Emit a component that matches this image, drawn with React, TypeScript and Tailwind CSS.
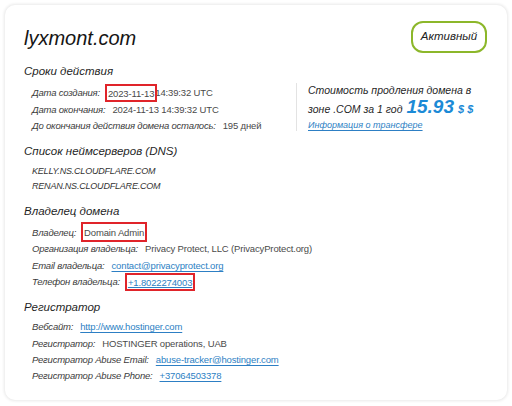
import React from "react";

const sans = "font-['Liberation_Sans',Arial,sans-serif]";
const italic = `${sans} italic`;

function Heading({ children }: { children: React.ReactNode }) {
  return (
    <div className={`${italic} text-[11.5px] leading-[18px] text-[#1f1f1f]`}>{children}</div>
  );
}

function Row({ label, children }: { label: string; children: React.ReactNode }) {
  return (
    <div className="flex h-[16.5px] items-center gap-[7px] whitespace-nowrap pl-[8px]">
      <span className={`${italic} text-[9.5px] tracking-[-0.2px] text-[#3c3c3c]`}>{label}</span>
      <span className={`${sans} text-[9.5px] tracking-[-0.15px] text-[#4a4a4a]`}>{children}</span>
    </div>
  );
}

function Link({ children }: { children: React.ReactNode }) {
  return <span className="text-[#2d7fc4] underline underline-offset-[2px]">{children}</span>;
}

function Marked({ children, className = "" }: { children: React.ReactNode; className?: string }) {
  return (
    <span className={`px-[1px] outline-2 outline-[#e0242a] ${className}`}>{children}</span>
  );
}

export default function App() {
  return (
    <div className="h-[406px] w-[512px] bg-white pl-[5px] pt-[5px]">
      <div className="h-[395px] w-[502px] rounded-[10px] bg-white pl-[19px] pr-[20px] pt-[16px] shadow-[0_0_3px_1px_rgba(0,0,0,0.09)]">
        {/* header: domain + status */}
        <div className="flex items-start justify-between">
          <div className={`${italic} mt-[3px] text-[20px] leading-[28px] text-[#151515]`}>lyxmont.com</div>
          <div className="flex h-[32px] w-[76px] items-center justify-center rounded-[12px] border-2 border-[#8cb72a]">
            <span className={`${italic} text-[11.5px] text-[#222]`}>Активный</span>
          </div>
        </div>

        {/* validity */}
        <div className="mt-[9px]">
          <Heading>Сроки действия</Heading>
          <div className="mt-[5px] flex">
            <div className="w-[272px]">
              <Row label="Дата создания:">
                <Marked className="py-[1.5px]">2023-11-13</Marked>14:39:32 UTC
              </Row>
              <Row label="Дата окончания:">2024-11-13 14:39:32 UTC</Row>
              <Row label="До окончания действия домена осталось:">195 дней</Row>
            </div>
            <div className="-mt-[2px] flex h-[48px] flex-col justify-center border-l border-[#e3e3e3] pl-[11px]">
              <div className={`${italic} text-[10.5px] leading-[16px] text-[#1f1f1f]`}>Стоимость продления домена в</div>
              <div className="flex items-baseline gap-[4px] leading-[18px]">
                <span className={`${italic} text-[10.5px] text-[#1f1f1f]`}>зоне .COM за 1 год</span>
                <span className={`${italic} text-[19px] font-bold text-[#1c8ad6]`}>15.93</span>
                <span className={`${italic} text-[11px] font-bold text-[#1c8ad6]`}>$ $</span>
              </div>
              <div className={`${italic} text-[9px] leading-[14px]`}>
                <Link>Информация о трансфере</Link>
              </div>
            </div>
          </div>
        </div>

        {/* name servers */}
        <div className="mt-[7px]">
          <Heading>Список неймсерверов (DNS)</Heading>
          <div className={`${italic} mt-[4px] pl-[8px] text-[9px] leading-[15px] tracking-[-0.2px] text-[#333]`}>
            <div>KELLY.NS.CLOUDFLARE.COM</div>
            <div>RENAN.NS.CLOUDFLARE.COM</div>
          </div>
        </div>

        {/* owner */}
        <div className="mt-[8px]">
          <Heading>Владелец домена</Heading>
          <div className="mt-[5px]">
            <Row label="Владелец:">
              <Marked className="py-[2.5px]">Domain Admin</Marked>
            </Row>
            <Row label="Организация владельца:">Privacy Protect, LLC (PrivacyProtect.org)</Row>
            <Row label="Email владельца:">
              <Link>contact@privacyprotect.org</Link>
            </Row>
            <Row label="Телефон владельца:">
              <Marked className="py-[1.5px]">
                <Link>+1.8022274003</Link>
              </Marked>
            </Row>
          </div>
        </div>

        {/* registrar */}
        <div className="mt-[7px]">
          <Heading>Регистратор</Heading>
          <div className="mt-[4px] [&>div]:h-[16.2px]">
            <Row label="Вебсайт:">
              <Link>http://www.hostinger.com</Link>
            </Row>
            <Row label="Регистратор:">HOSTINGER operations, UAB</Row>
            <Row label="Регистратор Abuse Email:">
              <Link>abuse-tracker@hostinger.com</Link>
            </Row>
            <Row label="Регистратор Abuse Phone:">
              <Link>+37064503378</Link>
            </Row>
          </div>
        </div>
      </div>
    </div>
  );
}
